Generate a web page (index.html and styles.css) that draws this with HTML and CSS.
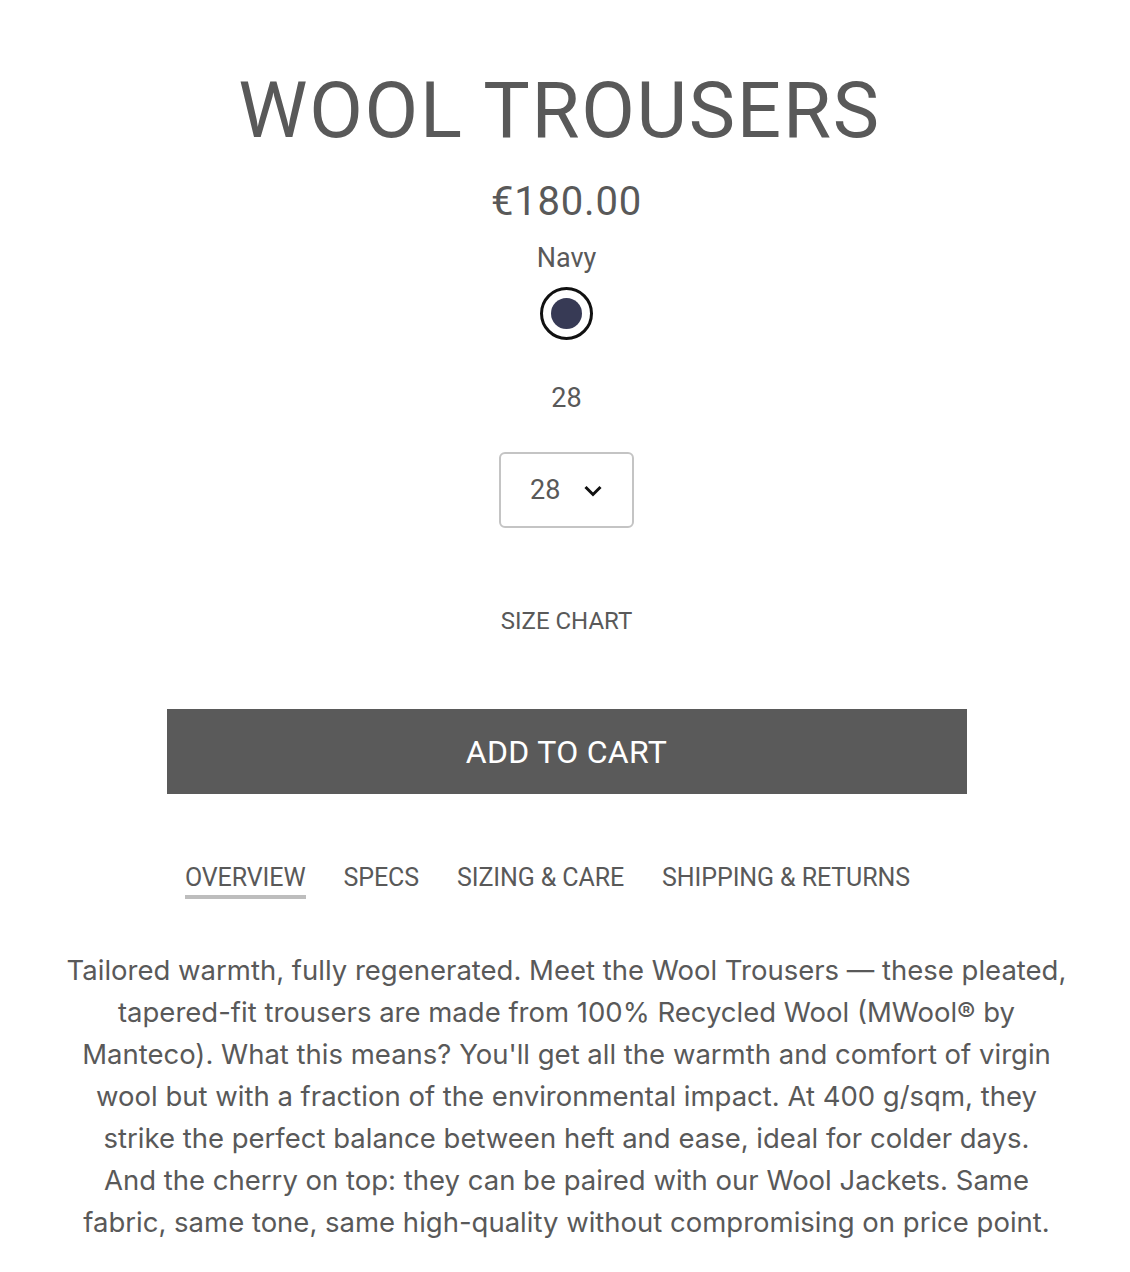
FILE: index.html
```html
<!DOCTYPE html>
<html lang="en">
<head>
<meta charset="utf-8">
<title>Wool Trousers</title>
<link rel="stylesheet" href="styles.css">
</head>
<body>
<main class="product">
  <h1 class="title">WOOL TROUSERS</h1>
  <div class="price">€180.00</div>
  <div class="option-label">Navy</div>
  <div class="swatches">
    <span class="swatch"><span class="swatch-fill"></span></span>
  </div>
  <div class="option-label size-label">28</div>
  <div class="select">
    <span class="select-value">28</span>
    <svg class="chevron" width="18" height="12" viewBox="0 0 18 12"><path d="M1.5 2l7.5 7.5 7.5-7.5" fill="none" stroke="#111" stroke-width="3"/></svg>
  </div>
  <a class="size-chart">SIZE CHART</a>
  <button class="add-to-cart">ADD TO CART</button>
  <nav class="tabs">
    <span class="tab active">OVERVIEW</span>
    <span class="tab">SPECS</span>
    <span class="tab">SIZING &amp; CARE</span>
    <span class="tab">SHIPPING &amp; RETURNS</span>
  </nav>
  <p class="description">Tailored warmth, fully regenerated. Meet the Wool Trousers — these pleated,<br>
  tapered-fit trousers are made from 100% Recycled Wool (MWool® by<br>
  Manteco). What this means? You'll get all the warmth and comfort of virgin<br>
  wool but with a fraction of the environmental impact. At 400 g/sqm, they<br>
  strike the perfect balance between heft and ease, ideal for colder days.<br>
  And the cherry on top: they can be paired with our Wool Jackets. Same<br>
  fabric, same tone, same high-quality without compromising on price point.</p>
</main>
</body>
</html>
```
FILE: styles.css
```css
* { box-sizing: border-box; }
html, body { margin: 0; padding: 0; background: #fff; }
body {
  font-family: Roboto, "Liberation Sans", Arial, sans-serif;
  color: #595959;
}
.product {
  display: flex;
  flex-direction: column;
  align-items: center;
  padding-top: 66px;
  padding-left: 3px;
}
.title {
  margin: 0 14px 0 0;
  font-weight: 400;
  font-size: 78px;
  line-height: 90px;
  letter-spacing: 1.7px;
  color: #595959;
}
.price {
  margin-top: 22px;
  font-size: 40px;
  line-height: 48px;
  letter-spacing: 0.8px;
}
.option-label {
  margin-top: 15px;
  font-size: 27px;
  line-height: 34px;
}
.swatches {
  margin-top: 12px;
  display: flex;
}
.swatch {
  width: 53px;
  height: 53px;
  border-radius: 50%;
  border: 3px solid #111;
  display: flex;
  align-items: center;
  justify-content: center;
}
.swatch-fill {
  width: 31px;
  height: 31px;
  border-radius: 50%;
  background: #373a55;
}
.size-label {
  margin-top: 41px;
}
.select {
  margin-top: 37px;
  width: 135px;
  height: 76px;
  border: 2px solid #c4c4c4;
  border-radius: 6px;
  display: flex;
  align-items: center;
  padding-left: 29px;
  gap: 24px;
}
.select-value {
  font-size: 27px;
}
.chevron { margin-top: 1px; }
.size-chart {
  margin-top: 78px;
  font-size: 24px;
  line-height: 30px;
}
.add-to-cart {
  margin-top: 73px;
  width: 800px;
  height: 85px;
  border: 0;
  background: #5a5a5a;
  color: #fff;
  font-family: inherit;
  font-size: 32px;
  letter-spacing: 0.3px;
  padding: 0;
}
.tabs {
  margin-top: 69px;
  display: flex;
}
.tab {
  margin-right: 38px;
  font-size: 25px;
  line-height: 30px;
  letter-spacing: -0.1px;
  padding-bottom: 2px;
  border-bottom: 4px solid transparent;
}
.tab.active { border-bottom-color: #bdbdbd; }
.description {
  margin: 50px 0 0;
  width: 1040px;
  text-align: center;
  font-family: "Inter", sans-serif;
  font-size: 27.5px;
  line-height: 42px;
  color: #595959;
}
```
